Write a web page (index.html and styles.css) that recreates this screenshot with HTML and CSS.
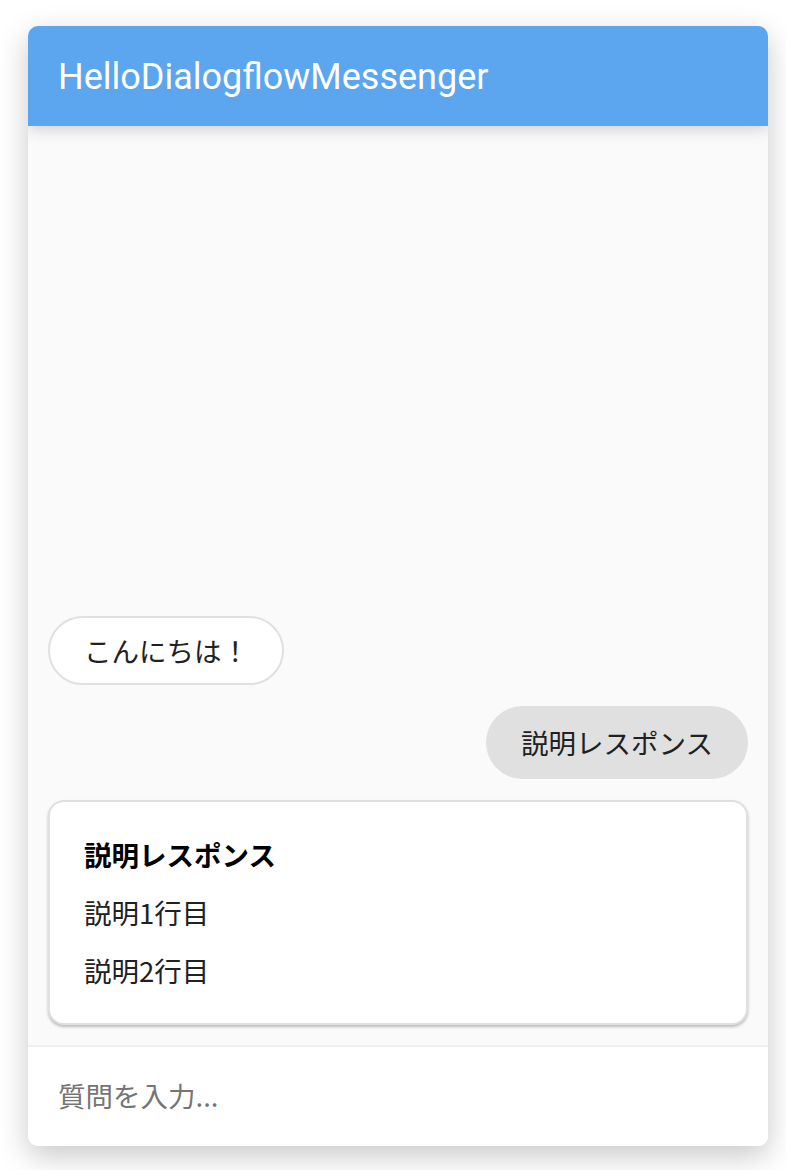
FILE: index.html
```html
<!DOCTYPE html>
<html lang="ja">
<head>
<meta charset="utf-8">
<title>HelloDialogflowMessenger</title>
<link rel="stylesheet" href="styles.css">
</head>
<body>
<div class="widget">
  <header class="titlebar">
    <div class="title">HelloDialogflowMessenger</div>
  </header>
  <main class="messages">
    <div class="bubble bot">こんにちは！</div>
    <div class="bubble user">説明レスポンス</div>
    <div class="card">
      <div class="card-title">説明レスポンス</div>
      <div class="card-line">説明1行目</div>
      <div class="card-line">説明2行目</div>
    </div>
  </main>
  <footer class="inputbar">
    <div class="placeholder">質問を入力...</div>
  </footer>
</div>
</body>
</html>
```
FILE: styles.css
```css
html, body {
  margin: 0;
  padding: 0;
  background: #ffffff;
}
body {
  font-family: Roboto, "Noto Sans CJK JP", sans-serif;
  padding: 26px 18px 24px 28px;
}
.widget {
  width: 740px;
  height: 1120px;
  border-radius: 10px;
  background: #fafafa;
  box-shadow: 0 10px 30px rgba(0,0,0,0.22);
  display: flex;
  flex-direction: column;
  overflow: hidden;
}
.titlebar {
  height: 100px;
  flex: none;
  background: #5ca5ef;
  display: flex;
  align-items: center;
  padding-left: 30px;
  padding-top: 2px;
  box-sizing: border-box;
  box-shadow: 0 4px 14px rgba(0,0,0,0.16);
  position: relative;
  z-index: 1;
}
.title {
  color: #ffffff;
  font-family: Roboto, sans-serif;
  font-size: 36px;
}
.messages {
  flex: 1;
  display: flex;
  flex-direction: column;
  justify-content: flex-end;
  padding: 0 20px 20px 20px;
  font-family: "Noto Sans CJK JP", sans-serif;
}
.bubble {
  font-size: 27.5px;
  line-height: 37px;
  color: #212121;
  border-radius: 40px;
}
.bot {
  align-self: flex-start;
  background: #ffffff;
  border: 2px solid #e0e0e0;
  padding: 14px 33px 14px 34px;
  margin-bottom: 21px;
}
.user {
  align-self: flex-end;
  background: #e0e0e0;
  padding: 18px 35px 18px 35px;
  margin-bottom: 21px;
}
.card {
  background: #ffffff;
  border: 2px solid #e0e0e0;
  border-radius: 16px;
  box-shadow: 0 2px 3px rgba(0,0,0,0.25);
  padding: 34px 34px 34px 34px;
}
.card-title {
  font-size: 27.5px;
  font-weight: bold;
  line-height: 37px;
  color: #000000;
  margin-bottom: 21px;
}
.card-line {
  font-size: 27.5px;
  line-height: 37px;
  color: #212121;
  margin-bottom: 21px;
}
.card-line:last-child {
  margin-bottom: 0;
}
.inputbar {
  height: 101px;
  flex: none;
  background: #ffffff;
  border-top: 2px solid #eeeeee;
  display: flex;
  align-items: center;
  padding-left: 30px;
  padding-bottom: 4px;
  box-sizing: border-box;
}
.placeholder {
  font-family: "Noto Sans CJK JP", sans-serif;
  font-size: 27.5px;
  color: #757575;
}
```
